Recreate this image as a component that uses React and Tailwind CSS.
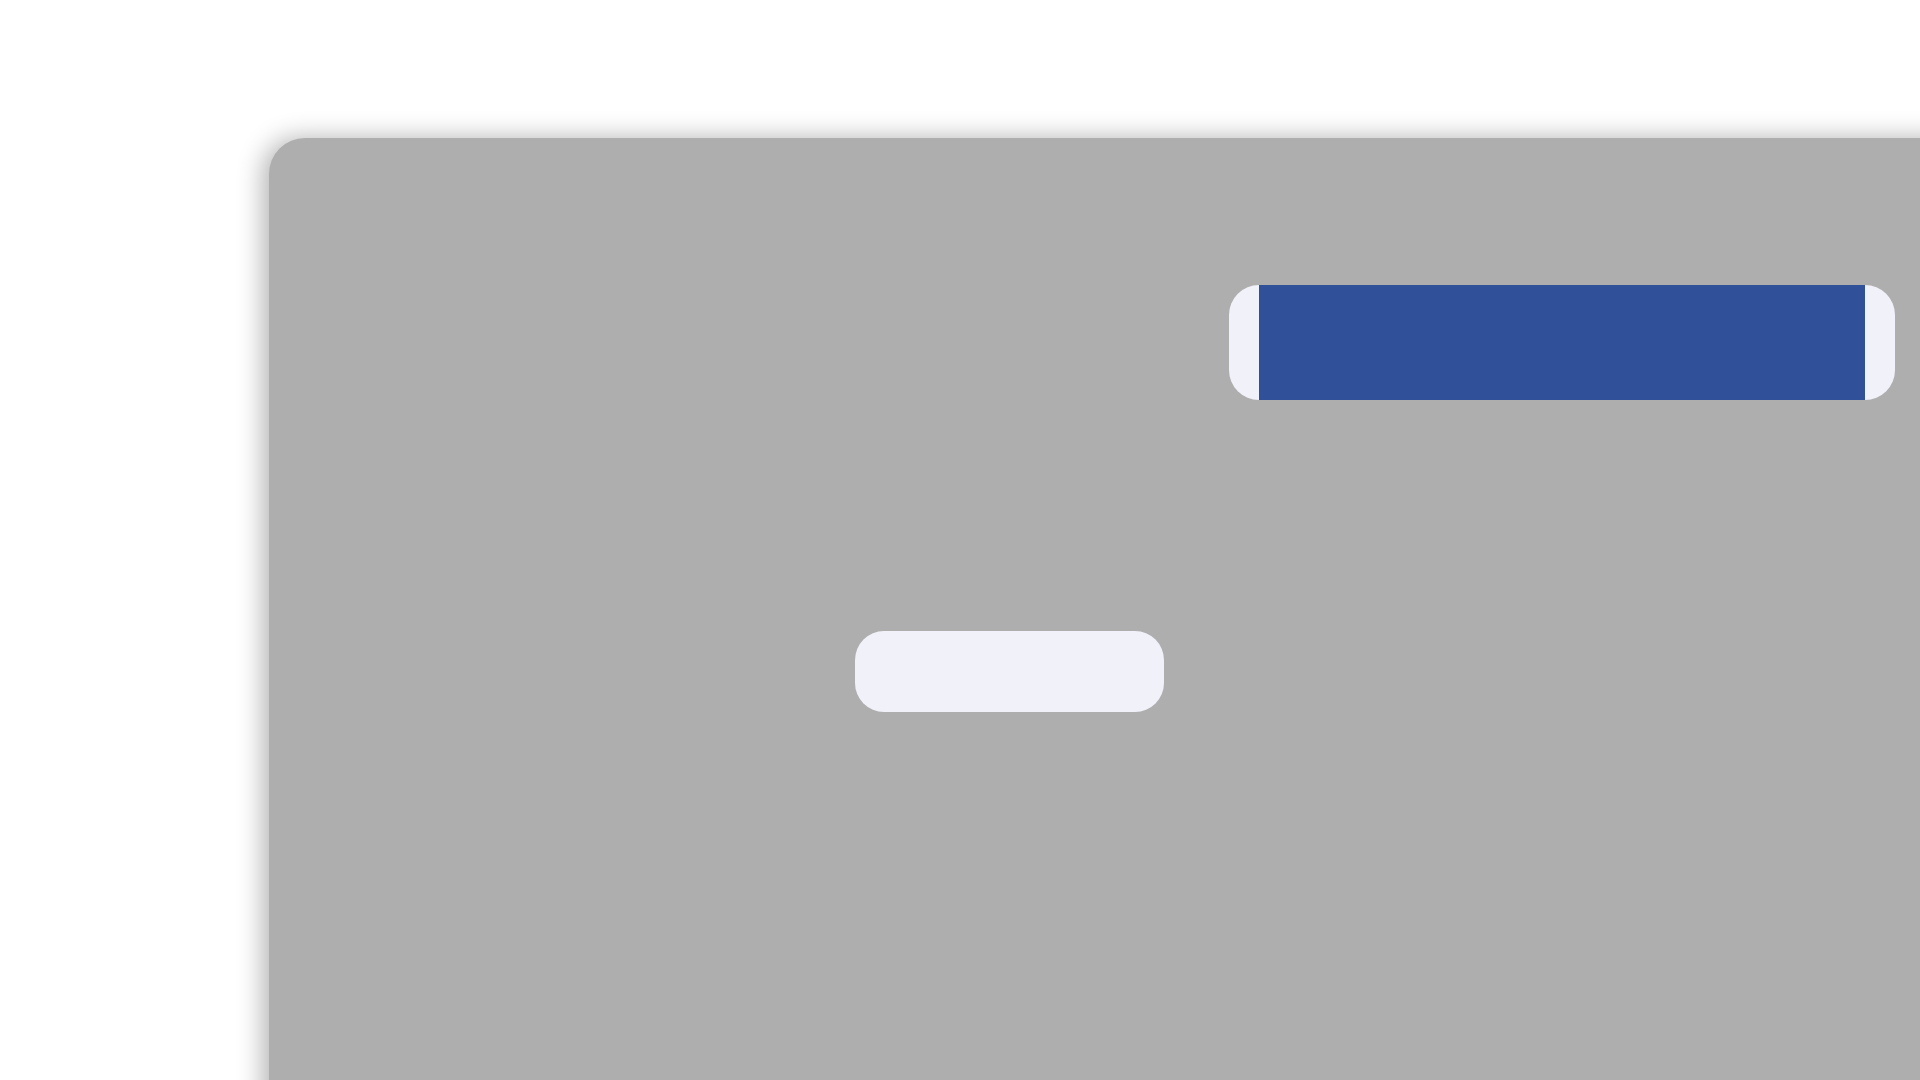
export default function App() {
  return (
    <div className="w-[1920px] h-[1080px] overflow-hidden bg-white" style={{ fontFamily: '"Liberation Sans", sans-serif' }}>
      <div className="ml-[269px] mt-[138px] w-[1700px] h-[1000px] rounded-tl-[36px] bg-[#aeaeae] shadow-[-6px_0_26px_rgba(0,0,0,0.3)] flex flex-col">
        <div className="pt-[147px] pl-[960px]">
          <div className="w-[666px] h-[115px] rounded-[30px] bg-[#f1f1fa] flex px-[30px]">
            <div className="flex-1 bg-[#30509a]" />
          </div>
        </div>
        <div className="mt-[231px] ml-[586px] w-[309px] h-[81px] rounded-[29px] bg-[#f1f1fa]" />
      </div>
    </div>
  );
}
